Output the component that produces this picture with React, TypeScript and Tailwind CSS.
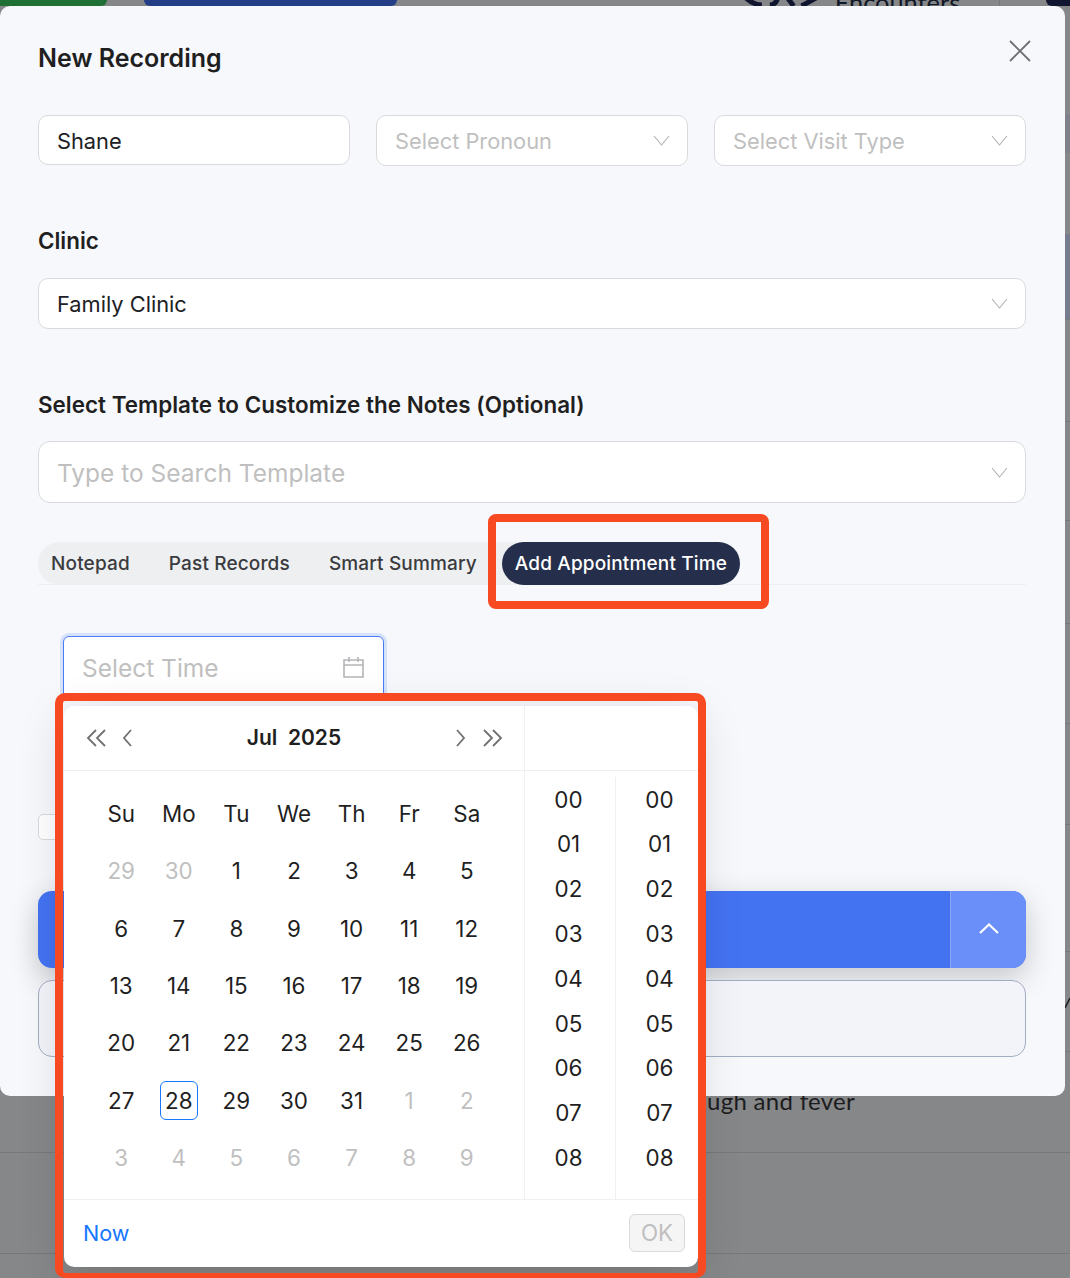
const days = [
  ["29", "30", "1", "2", "3", "4", "5"],
  ["6", "7", "8", "9", "10", "11", "12"],
  ["13", "14", "15", "16", "17", "18", "19"],
  ["20", "21", "22", "23", "24", "25", "26"],
  ["27", "28", "29", "30", "31", "1", "2"],
  ["3", "4", "5", "6", "7", "8", "9"],
];
const weekdays = ["Su", "Mo", "Tu", "We", "Th", "Fr", "Sa"];
const times = ["00", "01", "02", "03", "04", "05", "06", "07", "08"];
const bgRows = [
  "h-[108px]",
  "h-[39px] bg-[#7f8089]",
  "h-[81px]",
  "h-[86px] bg-[#777b8e] border-b border-[#77787a]",
  "h-[102px] border-b border-[#77787a]",
  "h-[99px] border-b border-[#77787a]",
  "h-[103px] border-b border-[#77787a]",
  "h-[100px] border-b border-[#77787a]",
  "h-[101px] border-b border-[#77787a]",
  "h-[127px] border-b border-[#77787a]",
  "h-[100px] border-b border-[#77787a]",
  "h-[101px] border-b border-[#77787a]",
  "h-[101px] border-b border-[#77787a]",
];

function Chevron({ className }: { className?: string }) {
  return (
    <svg width="17" height="11" viewBox="0 0 17 11" fill="none" stroke="#aeb0b4" strokeWidth="1.1" className={className}>
      <path d="M1 1 8.5 10 16 1" />
    </svg>
  );
}

function Nav({ d, size = 22 }: { d: string; size?: number }) {
  return (
    <svg width={size} height="18" viewBox={`0 0 ${size} 18`} fill="none" stroke="#6f7072" strokeWidth="1.8">
      <path d={d} />
    </svg>
  );
}

function SelectBox({ label, filled, className }: { label: string; filled?: boolean; className: string }) {
  return (
    <div className={`flex items-center justify-between rounded-[10px] border border-[#d9dade] bg-white pl-[18px] pr-[17px] ${className}`}>
      <span className={`pt-[2px] text-[21.8px] ${filled ? "text-[#202124]" : "text-[#bfbfbf]"}`}>{label}</span>
      <Chevron />
    </div>
  );
}

function Popup() {
  return (
    <div className="absolute left-[64px] top-[706px] z-20 flex h-[561px] w-[634px] flex-col rounded-[10px] bg-white text-[22.4px] text-[#1f1f1f] shadow-[0_10px_48px_rgba(0,0,0,0.14)]">
      <div className="flex min-h-0 flex-1">
        <div className="flex w-[461px] flex-col border-r border-[#f0f0f0]">
          <div className="flex h-[65px] items-center justify-between border-b border-[#f0f0f0] pl-[22px] pr-[21px]">
            <div className="flex items-center gap-[13px]">
              <Nav d="M10 1 2 9l8 8M19 1l-8 8 8 8" />
              <Nav d="M10 1 3 9l7 8" size={12} />
            </div>
            <span className="text-[21px] font-semibold">Jul&nbsp; 2025</span>
            <div className="flex items-center gap-[14px]">
              <Nav d="M2 1l7 8-7 8" size={12} />
              <Nav d="M3 1l8 8-8 8M12 1l8 8-8 8" />
            </div>
          </div>
          <div className="pl-[28.4px] pt-[14px]">
            <div className="grid grid-cols-[repeat(7,57.6px)]">
              {weekdays.map((w) => (
                <div key={w} className="flex h-[57.4px] items-center justify-center">{w}</div>
              ))}
              {days.flatMap((row, r) =>
                row.map((d, i) => {
                  const muted = r === 0 ? i < 2 : r === 4 ? i > 4 : r === 5;
                  const today = r === 4 && i === 1;
                  return (
                    <div key={`${r}-${i}`} className={`flex h-[57.4px] items-center justify-center ${muted ? "text-[#bfbfbf]" : ""}`}>
                      <span className={`flex h-[38.4px] w-[38.4px] items-center justify-center rounded-[6px] ${today ? "border border-[#1677ff]" : ""}`}>{d}</span>
                    </div>
                  );
                })
              )}
            </div>
          </div>
        </div>
        <div className="flex flex-1 flex-col">
          <div className="h-[65px] border-b border-[#f0f0f0]" />
          <div className="flex flex-1 pt-[6px]">
            {[0, 1].map((c) => (
              <div key={c} className={`flex flex-col items-center ${c === 0 ? "w-[91px] border-r border-[#f0f0f0] pr-[3px]" : "w-[82px] pl-[5px]"}`}>
                {times.map((t) => (
                  <div key={t} className="flex h-[44.8px] items-center justify-center">{t}</div>
                ))}
              </div>
            ))}
          </div>
        </div>
      </div>
      <div className="flex h-[68px] items-center justify-between border-t border-[#f0f0f0] pb-[2px] pl-[19px] pr-[13px]">
        <span className="pt-[2px] text-[21.6px] text-[#1677ff]">Now</span>
        <span className="flex h-[38px] w-[56px] items-center justify-center rounded-[6px] border border-[#d9d9d9] bg-[#f5f5f5] text-[#bfbfbf]">OK</span>
      </div>
    </div>
  );
}

export default function App() {
  return (
    <div className="relative h-[1278px] w-[1070px] overflow-hidden bg-[#868788] font-['Inter',sans-serif]">
      {/* page behind the dialog */}
      <div className="flex h-[6px] overflow-hidden">
        <div className="ml-[-20px] h-[6px] w-[128px] rounded-b-[12px] bg-[#1e7034]" />
        <div className="ml-[37px] h-[6px] w-[255px] rounded-b-[12px] bg-[#243f87]" />
        <svg width="80" height="6" viewBox="0 0 80 6" fill="none" stroke="#10162f" strokeWidth="5" className="ml-[345px]">
          <path d="M4-2q8 7 16 7M36-2q-2 7-8 7M78-4 60 6M46-2l6 8" />
        </svg>
        <span className="ml-[13px] mt-[-13px] font-['Lato',sans-serif] text-[25.4px] leading-[30px] text-[#111827]">Encounters</span>
        <div className="ml-[39px] h-[6px] w-px bg-[#77787a]" />
        <div className="ml-[46px] h-[6px] w-[24px] rounded-bl-[10px] bg-[#10162f]" />
      </div>
      <div>
        {bgRows.map((r, i) => (
          <div key={i} className={r} />
        ))}
      </div>
      <div className="absolute left-[707px] top-[1086px] font-['Lato',sans-serif] text-[24px] leading-[30px] tracking-[0.3px] text-[#1c1c1e]">ugh and fever</div>
      <svg width="5" height="12" viewBox="0 0 5 12" fill="none" stroke="#1c1c1e" strokeWidth="1.5" className="absolute left-[1065px] top-[997px]">
        <path d="M0 11 5 1" />
      </svg>

      {/* dialog */}
      <div className="absolute left-0 top-[6px] z-10 h-[1090px] w-[1065px] rounded-[10px] bg-[#f6f8fc] pl-[38px] pr-[39px] pt-[36px]">
        <h2 className="text-[25px] font-semibold leading-[32px] text-[#1f1f21]">New Recording</h2>
        <svg width="22" height="22" viewBox="0 0 22 22" fill="none" stroke="#6d6e70" strokeWidth="1.8" className="absolute left-[1009px] top-[34px]">
          <path d="M1 1l20 20M21 1 1 21" />
        </svg>
        <div className="mt-[41px] flex gap-[26px]">
          <div className="flex h-[50px] w-[312px] items-center rounded-[10px] border border-[#d9dade] bg-white pl-[18px] pt-[2px] text-[21.8px] text-[#202124]">Shane</div>
          <SelectBox label="Select Pronoun" className="h-[51px] w-[312px]" />
          <SelectBox label="Select Visit Type" className="h-[51px] w-[312px]" />
        </div>
        <div className="mt-[60px] text-[22.4px] font-semibold leading-[30px] text-[#1f1f21]">Clinic</div>
        <SelectBox label="Family Clinic" filled className="mt-[22px] h-[51px]" />
        <div className="mt-[60px] h-[30px] pt-[1px] text-[22.4px] font-semibold leading-[30px] tracking-[0.03px] text-[#1f1f21]">Select Template to Customize the Notes (Optional)</div>
        <div className="mt-[22px] flex h-[62px] items-center justify-between rounded-[12px] border border-[#d9dade] bg-white pl-[18px] pr-[17px]">
          <span className="pt-[2px] text-[24.5px] text-[#bfbfbf]">Type to Search Template</span>
          <Chevron />
        </div>
        <div className="mt-[39px] h-[43px] border-b border-[#eceef1]">
          <div className="flex h-[43px] w-fit items-center rounded-full bg-[#eeeff1] pl-[13px] text-[19px] font-medium tracking-[0.15px] text-[#3a3b3e]">
            <span className="pt-[2px]">Notepad</span>
            <span className="ml-[39px] pt-[2px]">Past Records</span>
            <span className="ml-[39px] pt-[2px]">Smart Summary</span>
            <span className="ml-[25px] flex h-[43px] items-center rounded-full bg-[#252e4b] px-[13px] pt-[2px] text-white">Add Appointment Time</span>
          </div>
        </div>
        <div className="ml-[25px] mt-[51px] flex h-[62px] w-[321px] items-start justify-between rounded-t-[6px] border border-[#4a7bf5] bg-white pl-[18px] pr-[19px] pt-[14px] shadow-[0_0_0_3px_rgba(74,123,245,0.18)]">
          <span className="text-[24.5px] leading-[34px] text-[#bfbfbf]">Select Time</span>
          <svg width="21" height="22" viewBox="0 0 21 22" fill="none" stroke="#b4b5b8" strokeWidth="1.6" className="mt-[5px]">
            <path d="M1 4h19v17H1zM1 9h19M6 1v5M15 1v5" />
          </svg>
        </div>
        <div className="mt-[116px] h-[26px] w-[22px] rounded-[5px] border border-[#d9dade] bg-white" />
        <div className="mt-[51px] flex h-[77px] overflow-hidden rounded-[14px] bg-[#4473f2] shadow-[0_10px_30px_rgba(0,0,0,0.2)]">
          <div className="flex-1" />
          <div className="flex w-[76px] items-center justify-center border-l border-[#8aa5f7] bg-[#6a8ff8]">
            <svg width="20" height="11" viewBox="0 0 20 11" fill="none" stroke="white" strokeWidth="2.2" className="mb-[3px]">
              <path d="M1 10 10 1.5 19 10" />
            </svg>
          </div>
        </div>
        <div className="mt-[12px] h-[77px] rounded-[14px] border border-[#a3adc2] bg-[#f2f4f9]" />
      </div>

      <Popup />

      {/* red annotation frames */}
      <div className="absolute left-[488px] top-[514px] z-30 h-[95px] w-[281px] rounded-[8px] border-[8px] border-[#f74a22]" />
      <div className="absolute left-[55px] top-[693px] z-30 h-[585px] w-[651px] rounded-[10px] border-[8px] border-b-[5px] border-[#f74a22]" />
    </div>
  );
}
